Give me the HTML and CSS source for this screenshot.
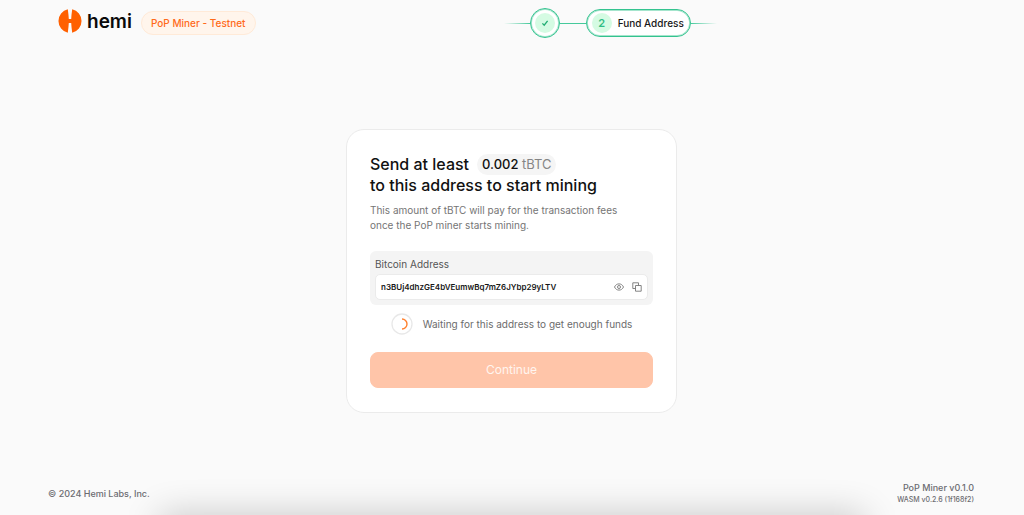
FILE: index.html
```html
<!DOCTYPE html>
<html lang="en">
<head>
<meta charset="utf-8">
<meta name="viewport" content="width=device-width, initial-scale=1">
<title>PoP Miner - Testnet</title>
<link rel="stylesheet" href="styles.css">
</head>
<body>
<header class="header">
  <div class="brand">
    <svg class="brand-mark" viewBox="0 0 24 24" aria-hidden="true">
      <path fill="#ff6000" d="M9.8.3A12 12 0 0 0 9.8 23.7Q10.600 18 10.800 14H13.200Q13.400 18 14.2 23.7A12 12 0 0 0 14.2.3Q13.400 6 13.200 10H10.800Q10.600 6 9.8.3Z"/>
    </svg>
    <span class="brand-name">hemi</span>
    <span class="badge">PoP Miner - Testnet</span>
  </div>
  <ol class="stepper">
    <li class="step-line fade-in"></li>
    <li class="step-done" aria-label="Step 1 done">
      <span class="step-dot">
        <svg class="check" viewBox="0 0 8 8" aria-hidden="true"><path d="M1.4 4.4 3.2 6.2 6.6 1.8"/></svg>
      </span>
    </li>
    <li class="step-line"></li>
    <li class="step-current"><span class="step-dot">2</span><span>Fund Address</span></li>
    <li class="step-line fade-out"></li>
  </ol>
</header>
<main class="main">
  <section class="card">
    <h1 class="title"><span class="title-row">Send at least <span class="amount">0.002 <span class="unit">tBTC</span></span></span>to this address to start mining</h1>
    <p class="lead">This amount of tBTC will pay for the transaction fees once the PoP miner starts mining.</p>
    <div class="address">
      <label class="address-label" for="address">Bitcoin Address</label>
      <div class="address-box">
        <input class="address-input" id="address" type="text" readonly value="n3BUj4dhzGE4bVEumwBq7mZ6JYbp29yLTV">
        <button class="icon-button" type="button" aria-label="Show address">
          <svg viewBox="0 0 10 10" aria-hidden="true"><path d="M.5 5C1.5 2.9 3 1.9 5 1.9S8.500 2.900 9.500 5C8.500 7.100 7 8.100 5 8.100S1.500 7.100.5 5Z"/><circle cx="5" cy="5" r="1.500"/></svg>
        </button>
        <button class="icon-button" type="button" aria-label="Copy address">
          <svg viewBox="0 0 10 10" aria-hidden="true"><path d="M3.500 6.500H.8V.8H6.500V3.500M3.500 3.500H9.200V9.200H3.500Z"/></svg>
        </button>
      </div>
    </div>
    <div class="status" role="status">
      <svg class="spinner" viewBox="0 0 22 22" aria-hidden="true"><circle class="ring" cx="11" cy="11" r="10"/><path class="arc" d="M11 6A5 5 0 0 1 11 16"/></svg>
      <span>Waiting for this address to get enough funds</span>
    </div>
    <button class="continue" type="button" disabled>Continue</button>
  </section>
</main>
<footer class="footer">
  <p class="copyright">© 2024 Hemi Labs, Inc.</p>
  <div class="versions"><p>PoP Miner v0.1.0</p><p class="wasm">WASM v0.2.6 (1f168f2)</p></div>
</footer>
</body>
</html>
```
FILE: styles.css
```css
* { box-sizing: border-box; }
h1, p, ol { margin: 0; padding: 0; }
button, input { font: inherit; color: inherit; }

body {
  margin: 0;
  min-height: 100vh;
  display: flex;
  flex-direction: column;
  overflow: hidden;
  position: relative;
  background: #fafafa;
  color: #171717;
  font: 10px/16px Inter, "Liberation Sans", sans-serif;
}
/* Soft shade along the bottom edge */
body::after {
  content: "";
  position: absolute;
  top: 100%;
  left: 16%;
  right: 16%;
  height: 20px;
  box-shadow: 0 5px 36px 4px rgba(0, 0, 0, 0.24);
  pointer-events: none;
}

.header {
  display: flex;
  justify-content: space-between;
  align-items: center;
  height: 46px;
  padding: 0 30% 0 58px;
}
.brand { display: flex; align-items: center; }
.brand-mark { width: 24px; height: 24px; margin-bottom: 4px; }
.brand-name {
  margin: 0 9px 2px 5px;
  color: #0a0a0a;
  font-size: 19px;
  font-weight: 600;
  line-height: 24px;
}
.badge {
  padding: 1px 9px;
  border: 1px solid #ffead8;
  border-radius: 12px;
  background: #fff5ec;
  color: #ff6a1a;
  font-weight: 500;
  line-height: 20px;
}

.stepper { display: flex; align-items: center; list-style: none; font-weight: 500; }
.step-line { width: 26px; height: 1px; background: #45c99b; }
.fade-in { background: linear-gradient(to right, transparent, #45c99b); }
.fade-out { background: linear-gradient(to left, transparent, #45c99b); }
.step-done, .step-current {
  display: flex;
  align-items: center;
  gap: 6px;
  padding: 3px;
  border: 1px solid #34c38f;
  border-radius: 16px;
  background: #fff;
  box-shadow: inset 0 0 0 1px #a5e5cd;
}
.step-done { padding: 4px; }
.step-current { padding: 3px 6px 3px 5px; }
.step-dot {
  display: flex;
  align-items: center;
  justify-content: center;
  width: 20px;
  height: 20px;
  border-radius: 50%;
  background: #d5fbe3;
  color: #2fbd85;
  font-size: 11px;
  font-weight: 600;
}
.check { width: 8px; height: 8px; fill: none; stroke: #22ad73; stroke-width: 1.3; }

.main { flex: 1; display: flex; align-items: center; justify-content: center; padding-top: 14px; }
.card {
  width: 331px;
  margin-right: 1px;
  padding: 24px 23px;
  border: 1px solid #ebebeb;
  border-radius: 18px;
  background: #fff;
}
.title { font-size: 16px; font-weight: 500; line-height: 21px; color: #111; }
.title-row { display: flex; align-items: center; gap: 8px; }
.amount { padding: 0 5px; border-radius: 11px; background: #f5f5f5; font-size: 13px; }
.unit { color: #858585; font-weight: 400; }
.lead { margin-top: 7px; max-width: 260px; color: #757575; line-height: 15px; }

.address { margin-top: 18px; padding: 5px; border-radius: 6px; background: #f4f4f4; }
.address-label { display: block; color: #555; }
.address-box {
  display: flex;
  align-items: center;
  gap: 8px;
  height: 26px;
  margin-top: 2px;
  padding: 0 5px;
  border: 1px solid #ebebeb;
  border-radius: 5px;
  background: #fff;
}
.address-input {
  flex: 1;
  min-width: 0;
  padding: 0;
  border: 0;
  outline: 0;
  background: none;
  font-size: 8px;
  font-weight: 600;
}
.icon-button { width: 10px; height: 10px; padding: 0; border: 0; background: none; }
.icon-button svg { display: block; fill: none; stroke: #777; stroke-width: 0.9; }

.status { display: flex; align-items: center; justify-content: center; gap: 10px; margin-top: 8px; color: #6c6c6c; }
.spinner { width: 22px; height: 22px; fill: none; }
.ring { stroke: #e8e8e8; stroke-width: 1.3; }
.arc { stroke: #ff812f; stroke-width: 1.4; }

.continue {
  display: block;
  width: 100%;
  height: 36px;
  margin-top: 17px;
  border: 1px solid #ffc5a9;
  border-radius: 8px;
  background: #ffc5a9;
  color: #fff5ef;
  font-size: 12px;
}

.footer {
  display: flex;
  align-items: center;
  justify-content: space-between;
  padding: 0 50px 9px 48px;
  color: #6c6c71;
  font-size: 9px;
  font-weight: 500;
  line-height: 12px;
}
.versions { text-align: right; }
.wasm { font-size: 7px; }
```
